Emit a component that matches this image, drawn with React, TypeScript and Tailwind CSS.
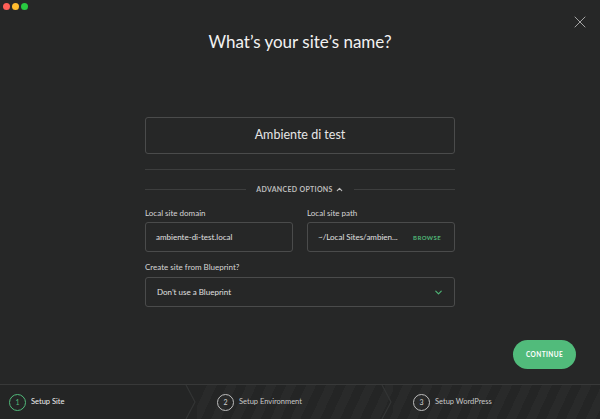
import { X, ChevronUp, ChevronDown } from 'lucide-react';

const steps = [
  { n: 1, label: 'Setup Site', active: true },
  { n: 2, label: 'Setup Environment', active: false },
  { n: 3, label: 'Setup WordPress', active: false },
];

function StepArrow() {
  return (
    <svg width="12" height="34" viewBox="0 0 12 34" className="shrink-0">
      <path d="M1 0 L10 17 L1 34" fill="none" stroke="#333535" strokeWidth="1.2" />
    </svg>
  );
}

export default function App() {
  return (
    <div
      className="relative flex h-[419px] w-[600px] flex-col overflow-hidden bg-[#262727] text-[#e8e8e8]"
      style={{ fontFamily: 'Lato, "Open Sans", sans-serif' }}
    >
      {/* window buttons */}
      <div className="flex gap-[2px] pl-[3px] pt-[3px]">
        <span className="h-[7px] w-[7px] rounded-full bg-[#fe5f57]" />
        <span className="h-[7px] w-[7px] rounded-full bg-[#febc2e]" />
        <span className="h-[7px] w-[7px] rounded-full bg-[#28c840]" />
      </div>

      <button className="absolute right-[10px] top-[12px] text-[#b0b0b0]">
        <X className="h-[20px] w-[20px]" strokeWidth={1.1} />
      </button>

      <h1 className="mt-[18px] text-center text-[17px] leading-[28px] text-[#f2f2f2]">
        What’s your site’s name?
      </h1>

      <div className="mx-auto w-[310px]">
        <div className="mt-[61px] flex h-[37px] items-center justify-center rounded-[3px] border border-[#4a4b4b] text-[12.5px] text-[#e6e6e6]">
          Ambiente di test
        </div>

        <div className="mt-[15px] h-px bg-[#3d3e3e]" />

        <div className="mt-[12px] flex h-[14px] items-center gap-[10px]">
          <div className="h-px flex-1 bg-[#3d3e3e]" />
          <span className="flex items-center gap-[2px] text-[7px] font-bold tracking-[0.3px] text-[#bdbdbd]">
            ADVANCED OPTIONS
            <ChevronUp className="h-[9px] w-[9px]" strokeWidth={3} />
          </span>
          <div className="h-px flex-1 bg-[#3d3e3e]" />
        </div>

        <div className="mt-[11px] grid grid-cols-2 gap-[14px]">
          <div>
            <div className="text-[8px] leading-[12px] text-[#d6d6d6]">Local site domain</div>
            <div className="mt-[3px] flex h-[30px] items-center rounded-[3px] border border-[#4a4b4b] px-[10px] text-[8px] text-[#e0e0e0]">
              ambiente-di-test.local
            </div>
          </div>
          <div>
            <div className="text-[8px] leading-[12px] text-[#d6d6d6]">Local site path</div>
            <div className="mt-[3px] flex h-[30px] items-center justify-between whitespace-nowrap rounded-[3px] border border-[#4a4b4b] pl-[10px] pr-[13px] text-[8px] text-[#e0e0e0]">
              <span>~/Local Sites/ambien...</span>
              <span className="text-[6px] font-bold tracking-[0.4px] text-[#4fb576]">BROWSE</span>
            </div>
          </div>
        </div>

        <div className="mt-[9px] text-[8px] leading-[12px] text-[#d6d6d6]">Create site from Blueprint?</div>
        <div className="mt-[4px] flex h-[30px] items-center justify-between rounded-[3px] border border-[#4a4b4b] pl-[11px] pr-[10px] text-[8px] text-[#e0e0e0]">
          <span>Don’t use a Blueprint</span>
          <ChevronDown className="h-[11px] w-[11px] text-[#4fb576]" strokeWidth={2.5} />
        </div>
      </div>

      <div className="mt-[33px] flex justify-end pr-[24px]">
        <button className="flex h-[29px] w-[63px] items-center justify-center rounded-full bg-[#51bb7b] text-[6.5px] font-bold tracking-[0.4px] text-white">
          CONTINUE
        </button>
      </div>

      {/* steps */}
      <div className="mt-auto flex h-[35px] border-t border-[#383939] bg-[#242525]">
        {steps.map((s, i) => (
          <div
            key={s.n}
            className={
              'flex items-center ' +
              (i === 0
                ? 'w-[197px]'
                : i === 1
                ? 'w-[196px] bg-[repeating-linear-gradient(115deg,#242525_0px,#242525_9px,#292a2a_9px,#292a2a_18px)]'
                : 'flex-1 bg-[repeating-linear-gradient(115deg,#242525_0px,#242525_9px,#292a2a_9px,#292a2a_18px)]')
            }
          >
            <div className={'flex flex-1 items-center gap-[5px] ' + (i === 0 ? 'pl-[9px]' : 'pl-[20px]')}>
              <span
                className={
                  'flex h-[17px] w-[17px] items-center justify-center rounded-full border-[1.5px] text-[7px] ' +
                  (s.active ? 'border-[#51bb7b] text-[#51bb7b]' : 'border-[#bdbdbd] text-[#d0d0d0]')
                }
              >
                {s.n}
              </span>
              <span className={'text-[7.5px] ' + (s.active ? 'text-[#f0f0f0]' : 'text-[#c8c8c8]')}>
                {s.label}
              </span>
            </div>
            {i < 2 && <StepArrow />}
          </div>
        ))}
      </div>
    </div>
  );
}
